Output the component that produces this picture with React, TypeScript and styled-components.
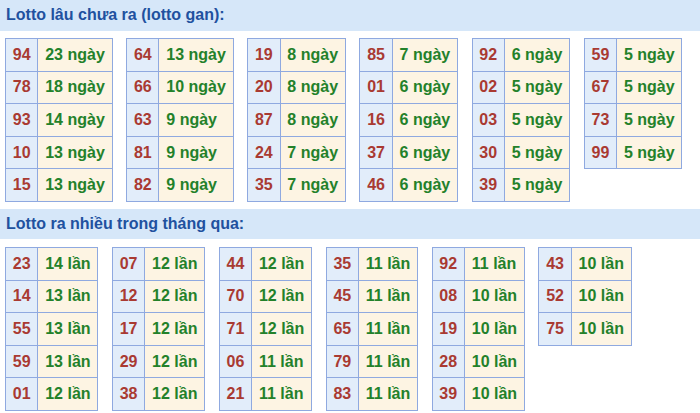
import React from 'react';
import styled, { createGlobalStyle } from 'styled-components';

type Entry = [string, string];

const GAN: Entry[][] = [
	[['94', '23'], ['78', '18'], ['93', '14'], ['10', '13'], ['15', '13']],
	[['64', '13'], ['66', '10'], ['63', '9'], ['81', '9'], ['82', '9']],
	[['19', '8'], ['20', '8'], ['87', '8'], ['24', '7'], ['35', '7']],
	[['85', '7'], ['01', '6'], ['16', '6'], ['37', '6'], ['46', '6']],
	[['92', '6'], ['02', '5'], ['03', '5'], ['30', '5'], ['39', '5']],
	[['59', '5'], ['67', '5'], ['73', '5'], ['99', '5']],
];

const NHIEU: Entry[][] = [
	[['23', '14'], ['14', '13'], ['55', '13'], ['59', '13'], ['01', '12']],
	[['07', '12'], ['12', '12'], ['17', '12'], ['29', '12'], ['38', '12']],
	[['44', '12'], ['70', '12'], ['71', '12'], ['06', '11'], ['21', '11']],
	[['35', '11'], ['45', '11'], ['65', '11'], ['79', '11'], ['83', '11']],
	[['92', '11'], ['08', '10'], ['19', '10'], ['28', '10'], ['39', '10']],
	[['43', '10'], ['52', '10'], ['75', '10']],
];

const SECTIONS = [
	{ id: 'gan', title: 'Lotto lâu chưa ra (lotto gan):', unit: 'ngày', tables: GAN },
	{ id: 'nhieu', title: 'Lotto ra nhiều trong tháng qua:', unit: 'lần', tables: NHIEU },
];

const GlobalStyle = createGlobalStyle`
	body {
		margin: 0;
		background: #ffffff;
		font-family: 'Liberation Sans', Arial, sans-serif;
	}
`;

const App = () => {
	return (
		<>
			<GlobalStyle />
			<Page>
				{SECTIONS.map(({ id, title, unit, tables }) => (
					<Section key={id}>
						<Heading>{title}</Heading>
						<TableRow>
							{tables.map((rows, i) => (
								<StatTable key={i}>
									<tbody>
										{rows.map(([num, count]) => (
											<tr key={num}>
												<NumCell>{num}</NumCell>
												<CountCell>
													{count} {unit}
												</CountCell>
											</tr>
										))}
									</tbody>
								</StatTable>
							))}
						</TableRow>
					</Section>
				))}
			</Page>
		</>
	);
};

const Page = styled.div`
	width: 700px;
	display: flex;
	flex-direction: column;
	gap: 7px;
`;

const Section = styled.section`
	display: flex;
	flex-direction: column;
`;

const Heading = styled.h2`
	margin: 0;
	height: 30.5px;
	line-height: 30.5px;
	padding-left: 6px;
	background: #d6e7f9;
	color: #21519f;
	font-size: 16px;
	font-weight: bold;
`;

const TableRow = styled.div`
	display: flex;
	align-items: flex-start;
	gap: 13.5px;
	padding: 7.5px 5px 0;
`;

const StatTable = styled.table`
	border-collapse: collapse;
	border: 1px solid #8fa9e0;
	font-size: 16px;
	font-weight: bold;
`;

const Cell = styled.td`
	height: 32.6px;
	padding: 0 6.8px;
	border: 1px solid #8fa9e0;
	box-sizing: border-box;
	white-space: nowrap;
	vertical-align: middle;
`;

const NumCell = styled(Cell)`
	background: #e2edfa;
	color: #a93a32;
`;

const CountCell = styled(Cell)`
	background: #fdf4e3;
	color: #23812a;
`;

export default App;
